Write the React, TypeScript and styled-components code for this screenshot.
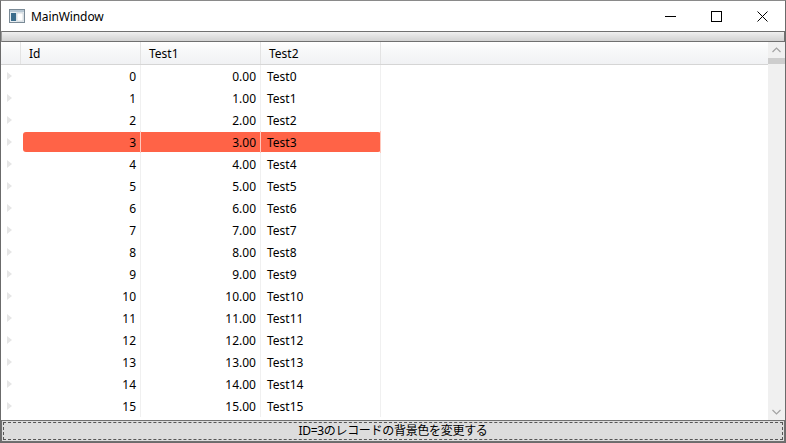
import React from "react";
import styled, { createGlobalStyle } from "styled-components";

const Global = createGlobalStyle`
  html, body { margin: 0; padding: 0; background: #ffffff; }
  body { font-family: "Noto Sans", "Noto Sans CJK JP", sans-serif; }
  * { box-sizing: border-box; }
`;

const Window = styled.div`
  width: 786px;
  height: 443px;
  display: flex;
  flex-direction: column;
  border: 1px solid #6b6b6b;
  border-top-color: #8a8a8a;
  background: #ffffff;
  overflow: hidden;
`;

const TitleBar = styled.div`
  height: 30px;
  flex: none;
  display: flex;
  align-items: center;
  background: #ffffff;
`;

const AppIcon = styled.div`
  width: 16px;
  height: 14px;
  margin-left: 8px;
  margin-right: 6px;
  display: flex;
  align-items: center;
`;

const Title = styled.div`
  font-size: 12px;
  color: #000;
  flex: 1;
  letter-spacing: -0.1px;
`;

const CaptionButton = styled.div`
  width: 46px;
  height: 30px;
  display: flex;
  align-items: center;
  justify-content: center;
`;

const TopButton = styled.div`
  height: 11px;
  flex: none;
  border: 1px solid #707070;
  border-left-color: #9a9a9a;
  background: linear-gradient(#f0f0f0, #e0e0e0 50%, #d2d2d2);
`;

const Grid = styled.div`
  flex: 1;
  display: flex;
  min-height: 0;
  background: #fff;
`;

const GridMain = styled.div`
  flex: 1;
  display: flex;
  flex-direction: column;
  min-width: 0;
  overflow: hidden;
`;

const HeaderRow = styled.div`
  height: 23px;
  flex: none;
  display: flex;
  background: linear-gradient(#ffffff, #f7f8f9 40%, #f1f2f4);
  border-bottom: 1px solid #d5d5d5;
`;

const HeaderCell = styled.div<{ $w?: number }>`
  width: ${(p) => (p.$w ? `${p.$w}px` : "auto")};
  flex: ${(p) => (p.$w ? "none" : "1")};
  border-right: ${(p) => (p.$w ? "1px solid #e3e3e3" : "none")};
  font-size: 12px;
  color: #000;
  display: flex;
  align-items: center;
  padding-left: 8px;
`;

const CornerCell = styled.div`
  width: 20px;
  flex: none;
  border-right: 1px solid #e3e3e3;
`;

const Row = styled.div`
  height: 22px;
  flex: none;
  display: flex;
`;

const RowHeader = styled.div`
  width: 20px;
  flex: none;
  display: flex;
  align-items: center;
  padding-left: 6px;
`;

const Triangle = styled.div`
  width: 0;
  height: 0;
  border-top: 4px solid transparent;
  border-bottom: 4px solid transparent;
  border-left: 5px solid #e6e6e6;
`;

const Cells = styled.div<{ $hl?: boolean }>`
  display: flex;
  position: relative;
  &::before {
    content: "";
    display: ${(p) => (p.$hl ? "block" : "none")};
    position: absolute;
    top: 1px;
    bottom: 1px;
    left: 2px;
    right: 0;
    background: #ff6347;
    border-radius: 3px;
  }
`;

const Cell = styled.div<{ $right?: boolean; $hl?: boolean }>`
  position: relative;
  width: 120px;
  height: 22px;
  flex: none;
  border-right: 1px solid ${(p) => (p.$hl ? "#ffc8bd" : "#f0f0f0")};
  font-size: 12px;
  color: #000;
  display: flex;
  align-items: center;
  justify-content: ${(p) => (p.$right ? "flex-end" : "flex-start")};
  padding: ${(p) => (p.$right ? "0 4px 0 0" : "0 0 0 6px")};
`;

const ScrollBar = styled.div`
  width: 17px;
  flex: none;
  background: #f0f0f0;
  display: flex;
  flex-direction: column;
`;

const ScrollArrow = styled.div`
  height: 16px;
  flex: none;
  display: flex;
  align-items: center;
  justify-content: center;
`;

const Thumb = styled.div`
  height: 6px;
  flex: none;
  background: #cdcdcd;
`;

const Track = styled.div`
  flex: 1;
`;

const BottomButton = styled.div`
  height: 22px;
  flex: none;
  border: 1px solid #707070;
  background: #dddddd;
  padding: 1px;
`;

const FocusRect = styled.div`
  height: 100%;
  border: 1px dashed #555;
  display: flex;
  align-items: center;
  justify-content: center;
  font-size: 12px;
  color: #000;
  line-height: 1;
  letter-spacing: -0.3px;
`;

const rows = Array.from({ length: 16 }, (_, i) => i);

export default function App() {
  return (
    <>
      <Global />
      <Window>
        <TitleBar>
          <AppIcon>
            <svg width="16" height="14" viewBox="0 0 16 14">
              <rect x="0.5" y="0.5" width="15" height="13" fill="#e8eef2" stroke="#7a8a96" />
              <rect x="1" y="1" width="14" height="2" fill="#b8c8d4" />
              <rect x="2" y="4" width="5" height="8" fill="#3c6d8c" />
              <rect x="8" y="4" width="6" height="8" fill="#ffffff" stroke="#b0bcc4" strokeWidth="0.5" />
            </svg>
          </AppIcon>
          <Title>MainWindow</Title>
          <CaptionButton>
            <svg width="11" height="11" viewBox="0 0 11 11">
              <line x1="0" y1="5.5" x2="11" y2="5.5" stroke="#000" strokeWidth="1" />
            </svg>
          </CaptionButton>
          <CaptionButton>
            <svg width="11" height="11" viewBox="0 0 11 11">
              <rect x="0.5" y="0.5" width="10" height="10" fill="none" stroke="#000" strokeWidth="1" />
            </svg>
          </CaptionButton>
          <CaptionButton>
            <svg width="11" height="11" viewBox="0 0 11 11">
              <path d="M0.5 0.5 L10.5 10.5 M10.5 0.5 L0.5 10.5" stroke="#000" strokeWidth="1" />
            </svg>
          </CaptionButton>
        </TitleBar>
        <TopButton />
        <Grid>
          <GridMain>
            <HeaderRow>
              <CornerCell />
              <HeaderCell $w={120}>Id</HeaderCell>
              <HeaderCell $w={120}>Test1</HeaderCell>
              <HeaderCell $w={120}>Test2</HeaderCell>
              <HeaderCell />
            </HeaderRow>
            {rows.map((i) => {
              const hl = i === 3;
              return (
                <Row key={i}>
                  <RowHeader>
                    <Triangle />
                  </RowHeader>
                  <Cells $hl={hl}>
                    <Cell $right $hl={hl}>{i}</Cell>
                    <Cell $right $hl={hl}>{i.toFixed(2)}</Cell>
                    <Cell $hl={hl}>{`Test${i}`}</Cell>
                  </Cells>
                </Row>
              );
            })}
          </GridMain>
          <ScrollBar>
            <ScrollArrow>
              <svg width="9" height="6" viewBox="0 0 9 6">
                <path d="M0.5 5 L4.5 1 L8.5 5" fill="none" stroke="#a3a3a3" strokeWidth="1.2" />
              </svg>
            </ScrollArrow>
            <Thumb />
            <Track />
            <ScrollArrow>
              <svg width="9" height="6" viewBox="0 0 9 6">
                <path d="M0.5 1 L4.5 5 L8.5 1" fill="none" stroke="#a3a3a3" strokeWidth="1.2" />
              </svg>
            </ScrollArrow>
          </ScrollBar>
        </Grid>
        <BottomButton>
          <FocusRect>ID=3のレコードの背景色を変更する</FocusRect>
        </BottomButton>
      </Window>
    </>
  );
}
